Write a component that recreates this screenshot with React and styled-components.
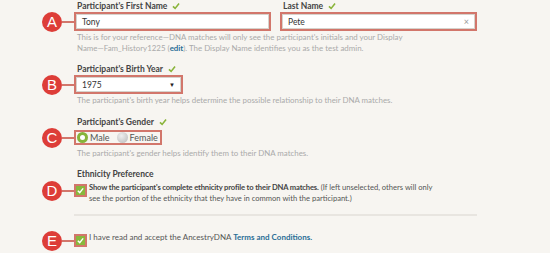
import React from 'react';
import styled, { createGlobalStyle } from 'styled-components';

const GlobalStyle = createGlobalStyle`
  html, body {
    margin: 0;
    padding: 0;
    background: #f7f5f1;
  }
  body {
    font-family: Lato, "Open Sans", sans-serif;
    color: #4a4a4a;
  }
`;

const Page = styled.div`
  width: 550px;
  height: 253px;
  overflow: hidden;
  box-sizing: border-box;
  padding: 0 73px 0 74px;
  display: flex;
  flex-direction: column;
`;

const NameRow = styled.div`
  display: flex;
  gap: 9px;
`;

const Field = styled.div`
  display: flex;
  flex-direction: column;
  width: ${props => props.width || 'auto'};
  margin-top: ${props => props.top || 0}px;
`;

const Label = styled.div`
  display: flex;
  align-items: center;
  gap: 5px;
  height: 11px;
  margin-left: 3px;
  font-size: 8.5px;
  font-weight: 700;
  color: #444;
`;

const Outlined = styled.div`
  position: relative;
  display: ${props => (props.inline ? 'inline-flex' : 'flex')};
  align-self: ${props => (props.inline ? 'flex-start' : 'stretch')};
  align-items: center;
  margin-top: ${props => props.top || 1}px;
  border: 2px solid #d2766b;
  box-sizing: border-box;
`;

const Callout = styled.div`
  position: absolute;
  right: 100%;
  top: 50%;
  transform: translateY(-50%);
  display: flex;
  align-items: center;
  pointer-events: none;
`;

const Badge = styled.div`
  width: 20px;
  height: 20px;
  border-radius: 50%;
  background: #dd3d38;
  color: #fff;
  font-family: "Liberation Sans", Arial, sans-serif;
  font-size: 15px;
  line-height: 20px;
  text-align: center;
`;

const Leader = styled.div`
  width: 14px;
  height: 2px;
  background: #d2766b;
`;

const TextBox = styled.div`
  flex: 1;
  height: 13px;
  display: flex;
  align-items: center;
  justify-content: space-between;
  padding: 0 5px;
  background: #fff;
  border: 1px solid #d6d3cd;
  font-size: 8.5px;
  color: #333;
`;

const Clear = styled.span`
  font-size: 9px;
  color: #999;
`;

const Arrow = styled.span`
  font-size: 6px;
  color: #222;
`;

const Help = styled.div`
  margin-top: ${props => props.top || 1}px;
  margin-left: 3px;
  font-size: 7.9px;
  line-height: 11px;
  color: #aaa;
  white-space: nowrap;
`;

const EditLink = styled.span`
  color: #2a6e96;
  font-weight: 700;
`;

const RadioGroup = styled.div`
  display: flex;
  align-items: center;
  gap: 7px;
  height: 11px;
  padding: 0 2px 0 1px;
`;

const RadioItem = styled.label`
  display: flex;
  align-items: center;
  gap: 2px;
  font-size: 9px;
  color: #555;
`;

const Radio = styled.span`
  width: ${props => (props.checked ? 5 : 11)}px;
  height: ${props => (props.checked ? 5 : 11)}px;
  border-radius: 50%;
  box-sizing: content-box;
  background: ${props =>
    props.checked ? '#fff' : 'radial-gradient(circle at 40% 35%, #eee, #b8b8b8)'};
  border: ${props => (props.checked ? '3px solid #86b43a' : '0')};
`;

const CheckRow = styled.div`
  display: flex;
  align-items: flex-start;
  gap: 2px;
  margin-top: ${props => props.top || 0}px;
`;

const Box = styled.span`
  width: 9px;
  height: 9px;
  background: #88b83c;
  display: flex;
  align-items: center;
  justify-content: center;
`;

const CheckText = styled.div`
  font-size: ${props => props.size || 7.6}px;
  line-height: 11px;
  color: #555;
  margin-top: -1px;
  white-space: nowrap;
`;

const Strong = styled.span`
  font-weight: 700;
  letter-spacing: ${props => props.tight || 0}px;
  color: ${props => props.color || '#444'};
`;

const Divider = styled.div`
  height: 2px;
  background: #e8e5e0;
  margin-top: 10px;
  width: 403px;
`;

const Tick = ({ color = '#8ab43a', size = 8 }) => (
  <svg width={size} height={size} viewBox="0 0 10 10">
    <path d="M1.2 5.4 L3.9 8 L8.8 2" fill="none" stroke={color} strokeWidth="2" />
  </svg>
);

const Callbox = ({ letter }) => (
  <Callout>
    <Badge>{letter}</Badge>
    <Leader />
  </Callout>
);

const CheckBox = ({ letter }) => (
  <Outlined inline top={0}>
    <Callbox letter={letter} />
    <Box>
      <Tick color="#fff" size={7} />
    </Box>
  </Outlined>
);

export default function App() {
  return (
    <>
      <GlobalStyle />
      <Page>
        <NameRow>
          <Field width="197px">
            <Label>
              Participant's First Name <Tick />
            </Label>
            <Outlined>
              <Callbox letter="A" />
              <TextBox>Tony</TextBox>
            </Outlined>
          </Field>
          <Field width="197px">
            <Label>
              Last Name <Tick />
            </Label>
            <Outlined>
              <TextBox>
                Pete <Clear>×</Clear>
              </TextBox>
            </Outlined>
          </Field>
        </NameRow>
        <Help>
          This is for your reference—DNA matches will only see the participant's initials and your Display
          <br />
          Name—Fam_History1225 (<EditLink>edit</EditLink>). The Display Name identifies you as the test admin.
        </Help>

        <Field top={9}>
          <Label>
            Participant's Birth Year <Tick />
          </Label>
          <Outlined inline>
            <Callbox letter="B" />
            <TextBox style={{ width: 93 }}>
              1975 <Arrow>▼</Arrow>
            </TextBox>
          </Outlined>
          <Help>The participant's birth year helps determine the possible relationship to their DNA matches.</Help>
        </Field>

        <Field top={10}>
          <Label>
            Participant's Gender <Tick />
          </Label>
          <Outlined inline top={3}>
            <Callbox letter="C" />
            <RadioGroup>
              <RadioItem>
                <Radio checked /> Male
              </RadioItem>
              <RadioItem>
                <Radio /> Female
              </RadioItem>
            </RadioGroup>
          </Outlined>
          <Help top={3}>The participant's gender helps identify them to their DNA matches.</Help>
        </Field>

        <Field top={9}>
          <Label>Ethnicity Preference</Label>
          <CheckRow top={4}>
            <CheckBox letter="D" />
            <CheckText>
              <Strong tight={-0.15}>
                Show the participant's complete ethnicity profile to their DNA matches.
              </Strong>{' '}
              (If left unselected, others will only
              <br />
              see the portion of the ethnicity that they have in common with the participant.)
            </CheckText>
          </CheckRow>
        </Field>

        <Divider />

        <CheckRow top={17}>
          <CheckBox letter="E" />
          <CheckText size={8}>
            I have read and accept the AncestryDNA <Strong color="#2a6e96">Terms and Conditions.</Strong>
          </CheckText>
        </CheckRow>
      </Page>
    </>
  );
}
